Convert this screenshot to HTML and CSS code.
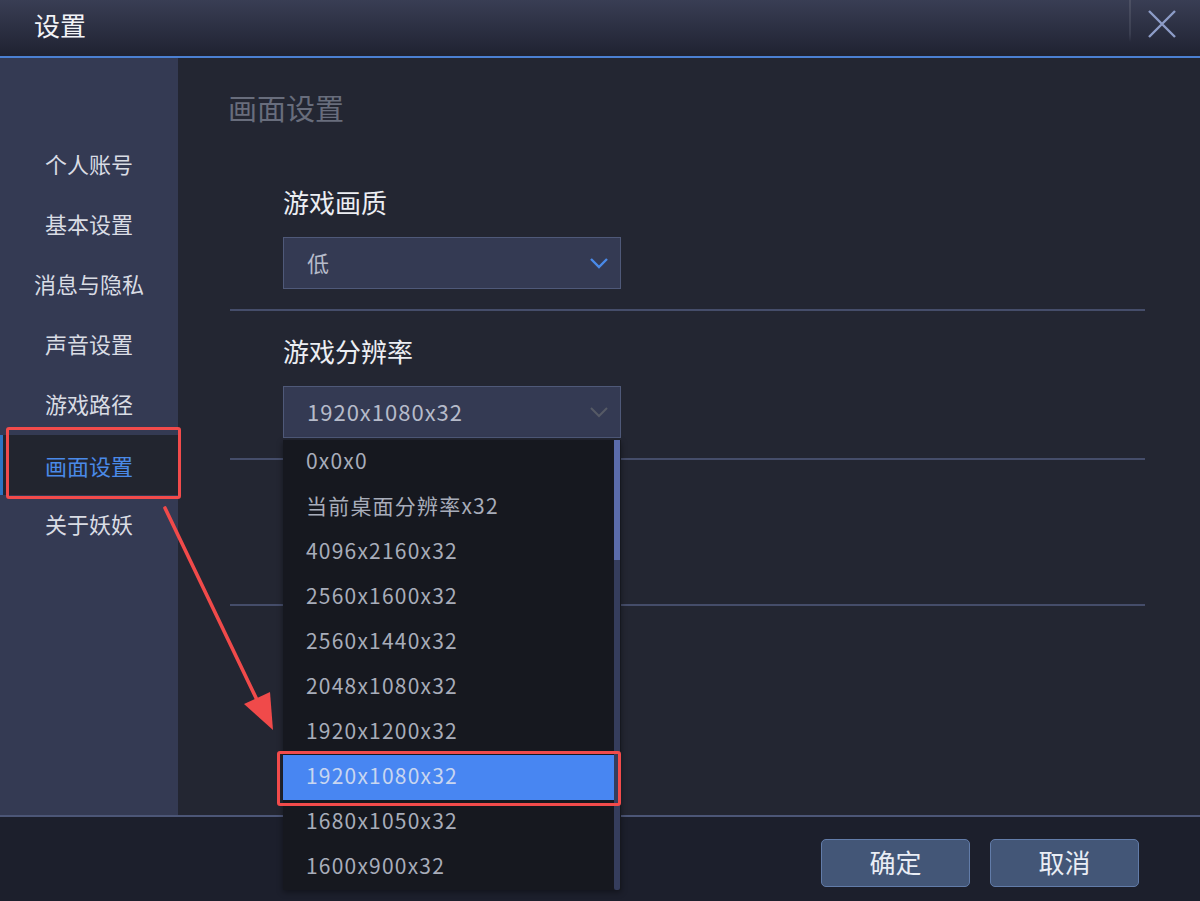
FILE: index.html
```html
<!DOCTYPE html>
<html lang="zh-CN">
<head>
<meta charset="utf-8">
<title>设置</title>
<link rel="stylesheet" href="styles.css">
</head>
<body>
<div class="window">
  <header class="titlebar">
    <div class="title">设置</div>
    <div class="close-wrap">
      <span class="sep"></span>
      <svg class="close" width="30" height="30" viewBox="0 0 30 30"><path d="M2 2 L28 28 M28 2 L2 28" stroke="#8d9cc8" stroke-width="2.4" fill="none"/></svg>
    </div>
  </header>
  <div class="body">
    <nav class="sidebar">
      <div class="nav-item">个人账号</div>
      <div class="nav-item">基本设置</div>
      <div class="nav-item">消息与隐私</div>
      <div class="nav-item">声音设置</div>
      <div class="nav-item">游戏路径</div>
      <div class="nav-item active">画面设置</div>
      <div class="nav-item">关于妖妖</div>
    </nav>
    <main class="main">
      <h1 class="heading">画面设置</h1>
      <section class="section">
        <div class="label">游戏画质</div>
        <div class="select">
          <span class="value">低</span>
          <svg class="chev" width="20" height="12" viewBox="0 0 20 12"><path d="M2 2 L10 10 L18 2" stroke="#4a8ae8" stroke-width="2.4" fill="none"/></svg>
        </div>
      </section>
      <section class="section">
        <div class="label">游戏分辨率</div>
        <div class="select open">
          <span class="value">1920x1080x32</span>
          <svg class="chev" width="20" height="12" viewBox="0 0 20 12"><path d="M2 2 L10 10 L18 2" stroke="#565a66" stroke-width="2" fill="none"/></svg>
          <ul class="dropdown">
            <li>0x0x0</li>
            <li>当前桌面分辨率x32</li>
            <li>4096x2160x32</li>
            <li>2560x1600x32</li>
            <li>2560x1440x32</li>
            <li>2048x1080x32</li>
            <li>1920x1200x32</li>
            <li class="hl">1920x1080x32</li>
            <li>1680x1050x32</li>
            <li>1600x900x32</li>
            <span class="scroll"><span class="thumb"></span></span>
          </ul>
        </div>
      </section>
      <section class="section blank"></section>
    </main>
  </div>
  <footer class="footer">
    <button class="btn">确定</button>
    <button class="btn">取消</button>
  </footer>

  <div class="mark mark-nav"></div>
  <div class="mark mark-item"></div>
  <svg class="arrow" width="1200" height="901" viewBox="0 0 1200 901">
    <line x1="165" y1="508" x2="258" y2="702" stroke="#f04a4a" stroke-width="3.6" stroke-linecap="round"/>
    <polygon points="244,704 270,692 273,730" fill="#f04a4a"/>
  </svg>
</div>
</body>
</html>
```
FILE: styles.css
```css
* { box-sizing: border-box; margin: 0; padding: 0; }
html, body { width: 1200px; height: 901px; overflow: hidden; }
body {
  background: #1c1f2c;
  font-family: "Noto Sans CJK SC", "Noto Sans", sans-serif;
  color: #d8dbe3;
}
.window {
  position: relative;
  width: 1200px;
  height: 901px;
  display: flex;
  flex-direction: column;
}
.titlebar {
  height: 58px;
  flex: none;
  display: flex;
  align-items: flex-start;
  justify-content: space-between;
  background: linear-gradient(#393e54, #1f2231);
  border-bottom: 2px solid #4b80d2;
}
.title {
  margin: 6px 0 0 34px;
  font-size: 26px;
  line-height: 38px;
  color: #f2f3f7;
}
.close-wrap {
  display: flex;
  align-items: flex-start;
}
.sep {
  width: 2px;
  height: 42px;
  background: linear-gradient(#4d5164, #3a3e50 80%, rgba(58,62,80,0));
  margin-right: 16px;
}
.close {
  margin: 9px 23px 0 0;
}
.body {
  display: flex;
  height: 757px;
  flex: none;
}
.sidebar {
  width: 178px;
  flex: none;
  background: #343a53;
  padding-top: 75px;
  display: flex;
  flex-direction: column;
}
.nav-item {
  height: 60px;
  line-height: 60px;
  text-align: center;
  font-size: 22px;
  color: #d9dce4;
}
.nav-item.active {
  background: #22252f;
  color: #4a8ae8;
  border-left: 3px solid #2f74c2;
  padding-right: 3px;
  margin-top: 2px;
  height: 60px;
}
.nav-item.active + .nav-item {
  margin-top: -2px;
}
.main {
  flex: 1;
  background: #232632;
  padding: 29px 55px 0 50px;
}
.heading {
  font-size: 29px;
  font-weight: normal;
  line-height: 40px;
  color: #686d7c;
  margin-bottom: 56px;
}
.section {
  margin-left: 2px;
  padding: 0 0 20px 53px;
  border-bottom: 2px solid #454d6a;
  margin-bottom: 21px;
}
.section.blank {
  height: 146px;
  margin-top: -21px;
  padding: 0;
}
.label {
  font-size: 26px;
  line-height: 38px;
  color: #eceef3;
  margin-bottom: 16px;
}
.select {
  position: relative;
  width: 338px;
  height: 52px;
  background: #343a53;
  border: 1px solid #4f5979;
  display: flex;
  align-items: center;
  justify-content: space-between;
  padding: 0 11px 2px 23px;
}
.chev { margin-top: 2px; }
.value {
  font-size: 22px;
  letter-spacing: 1px;
  color: #b6bbca;
}
.dropdown {
  position: absolute;
  left: -1px;
  top: 53px;
  width: 338px;
  height: 450px;
  background: #16181f;
  list-style: none;
  z-index: 5;
  box-shadow: 0 2px 6px rgba(0,0,0,0.4);
}
.dropdown li {
  height: 45px;
  line-height: 41px;
  padding: 0 0 4px 23px;
  font-size: 21px;
  letter-spacing: 1.2px;
  color: #a8adba;
  margin-right: 7px;
}
.dropdown li.hl {
  background: #4886f2;
  color: #c9d6f0;
}
.scroll {
  position: absolute;
  right: 1px;
  top: 0;
  width: 6px;
  height: 450px;
  background: #353d5c;
  border-radius: 0 0 2px 2px;
}
.thumb {
  display: block;
  width: 6px;
  height: 120px;
  background: #5b6cab;
}
.footer {
  flex: 1;
  border-top: 2px solid #4c5677;
  background: #1c1f2c;
  display: flex;
  justify-content: flex-end;
  align-items: flex-start;
  gap: 20px;
  padding: 22px 61px 0 0;
}
.btn {
  width: 149px;
  height: 48px;
  background: #435677;
  border: 1px solid #627ca9;
  border-radius: 5px;
  color: #e9edf5;
  font-family: inherit;
  font-size: 26px;
  line-height: 44px;
  padding-bottom: 2px;
}
.mark {
  position: absolute;
  border: 3px solid #f24b4b;
  border-radius: 3px;
  z-index: 10;
}
.mark-nav {
  left: 6px;
  top: 427px;
  width: 175px;
  height: 72px;
}
.mark-item {
  left: 277px;
  top: 751px;
  width: 344px;
  height: 55px;
}
.arrow {
  position: absolute;
  left: 0;
  top: 0;
  z-index: 11;
  pointer-events: none;
}
```
